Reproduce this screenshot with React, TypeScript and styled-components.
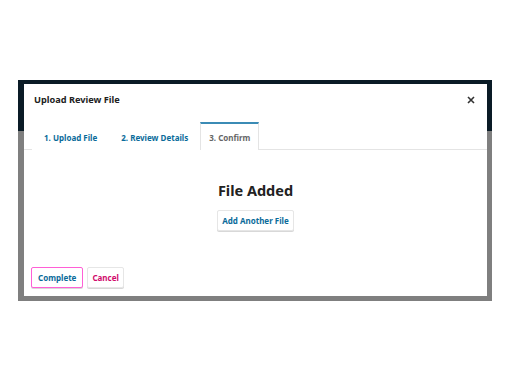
import React from "react";
import styled, { createGlobalStyle } from "styled-components";

const Global = createGlobalStyle`
  html, body { margin: 0; padding: 0; background: #fff; }
  body { font-family: "Noto Sans", "Open Sans", sans-serif; }
  * { box-sizing: border-box; }
`;

const Stage = styled.div`
  width: 510px;
  height: 382px;
  padding: 80px 18px 0 18px;
`;

const AppFrame = styled.div`
  position: relative;
  width: 474px;
  height: 221px;
  display: grid;
  grid-template-rows: 51px 1fr;
  background: #7f7f7f;
  overflow: hidden;
`;

const AppHeader = styled.div`
  background: #0a1b26;
`;

const AppBody = styled.div`
  background: #7f7f7f;
`;

const Modal = styled.div`
  position: absolute;
  left: 6px;
  top: 4px;
  width: 463px;
  height: 212px;
  background: #fff;
  display: flex;
  flex-direction: column;
`;

const ModalHeader = styled.div`
  display: flex;
  align-items: center;
  justify-content: space-between;
  height: 31px;
  padding: 0 10px 0 10px;
  flex-shrink: 0;
`;

const Title = styled.div`
  font-size: 9.2px;
  font-weight: 700;
  color: #222;
`;

const Close = styled.button`
  border: none;
  background: none;
  padding: 0;
  width: 12px;
  height: 12px;
  display: flex;
  align-items: center;
  justify-content: center;
  cursor: pointer;
`;

const TabBar = styled.div`
  display: flex;
  align-items: flex-end;
  height: 35px;
  padding-left: 8px;
  border-bottom: 1px solid #e4e4e4;
  flex-shrink: 0;
`;

const Tab = styled.div<{ $active?: boolean }>`
  height: 28px;
  padding: 0 ${(p) => (p.$active ? "8px" : "11px")};
  display: flex;
  align-items: center;
  font-size: 8px;
  font-weight: 700;
  color: ${(p) => (p.$active ? "#666" : "#0a6b9a")};
  margin-bottom: -1px;
  background: #fff;
  border-top: 2px solid ${(p) => (p.$active ? "#3b8bb5" : "transparent")};
  border-left: 1px solid ${(p) => (p.$active ? "#e4e4e4" : "transparent")};
  border-right: 1px solid ${(p) => (p.$active ? "#e4e4e4" : "transparent")};
`;

const Content = styled.div`
  flex: 1;
  display: flex;
  flex-direction: column;
  align-items: center;
  padding-top: 31px;
`;

const Heading = styled.div`
  font-size: 14.5px;
  font-weight: 700;
  color: #222;
  line-height: 18px;
`;

const Button = styled.button<{ $danger?: boolean; $focus?: boolean }>`
  font-family: inherit;
  font-size: 8px;
  font-weight: 700;
  height: 21px;
  padding: 0 ${(p) => (p.$focus ? "6px" : "4px")};
  background: #fff;
  color: ${(p) => (p.$danger ? "#d00a6c" : "#0a6b9a")};
  border: 1px solid ${(p) => (p.$focus ? "#ff5fd6" : "#e6e6e6")};
  border-radius: 2px;
  box-shadow: 0 1px 0 #d8d8d8;
  cursor: pointer;
`;

const AddButton = styled(Button)`
  margin-top: 11px;
`;

const Footer = styled.div`
  display: flex;
  gap: 4px;
  padding: 0 0 8px 7px;
  flex-shrink: 0;
`;

export default function App() {
  return (
    <>
      <Global />
      <Stage>
        <AppFrame>
          <AppHeader />
          <AppBody />
          <Modal>
            <ModalHeader>
              <Title>Upload Review File</Title>
              <Close aria-label="Close">
                <svg width="8" height="8" viewBox="0 0 8 8">
                  <path d="M1 1L7 7M7 1L1 7" stroke="#333" strokeWidth="1.6" />
                </svg>
              </Close>
            </ModalHeader>
            <TabBar>
              <Tab>1. Upload File</Tab>
              <Tab>2. Review Details</Tab>
              <Tab $active>3. Confirm</Tab>
            </TabBar>
            <Content>
              <Heading>File Added</Heading>
              <AddButton>Add Another File</AddButton>
            </Content>
            <Footer>
              <Button $focus>Complete</Button>
              <Button $danger>Cancel</Button>
            </Footer>
          </Modal>
        </AppFrame>
      </Stage>
    </>
  );
}
